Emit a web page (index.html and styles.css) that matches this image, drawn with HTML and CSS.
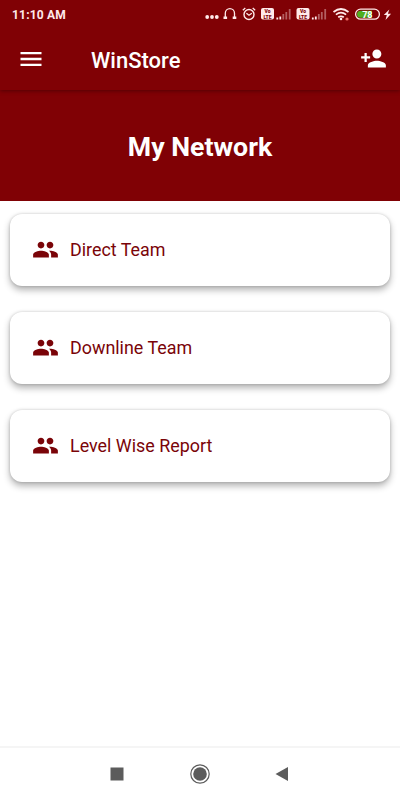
FILE: index.html
```html
<!DOCTYPE html>
<html lang="en">
<head>
  <meta charset="utf-8">
  <meta name="viewport" content="width=device-width, initial-scale=1">
  <title>WinStore</title>
  <link rel="stylesheet" href="styles.css">
</head>
<body>
  <header class="top">
    <div class="status-bar">
      <span class="time">11:10 AM</span>
      <svg class="status-icons" viewBox="0 0 188 18" fill="none" stroke="currentColor">
        <g fill="currentColor" stroke="none">
          <circle cx="2.200" cy="12" r="1.900"/>
          <circle cx="7" cy="12" r="1.900"/>
          <circle cx="11.800" cy="12" r="1.900"/>
        </g>
        <!-- headset -->
        <path d="M20.300 13.500V8.200a4.600 4.600 0 0 1 9.200 0v5.300" stroke-width="1.300"/>
        <path d="M18.500 12.800h3.600M27.700 12.800h3.600" stroke-width="2.400"/>
        <!-- alarm -->
        <circle cx="44" cy="9.500" r="5" stroke-width="1.400"/>
        <path d="M41.400 8.300l2.600 2 2.800-2M37.800 5.300l2.500-2.200M50.200 5.300l-2.500-2.200" stroke-width="1.300"/>
        <!-- sim 1 -->
        <rect x="56" y="3" width="13" height="11.600" rx="2" fill="currentColor" stroke="none"/>
        <text class="volte" x="62.500" y="8.200">Vo</text>
        <text class="volte" x="62.500" y="13.500">LTE</text>
        <g stroke-width="1.800">
          <path d="M72.300 14.500v-2M75.300 14.500v-3"/>
          <path class="dim" d="M78.300 14.500V9M81.300 14.500V7M84.700 14.500V4"/>
        </g>
        <!-- sim 2 -->
        <rect x="91.500" y="3" width="13" height="11.600" rx="2" fill="currentColor" stroke="none"/>
        <text class="volte" x="98" y="8.200">Vo</text>
        <text class="volte" x="98" y="13.500">LTE</text>
        <g stroke-width="1.800">
          <path d="M107.800 14.500v-2M110.800 14.500v-3"/>
          <path class="dim" d="M113.800 14.500V9M116.800 14.500V7M120.200 14.500V4"/>
        </g>
        <!-- wifi -->
        <path d="M128.500 7q7.500-6 15 0M130.900 9.700q5.100-4 10.200 0M133.200 12.300q2.800-2 5.600 0" stroke-width="1.700"/>
        <circle cx="136" cy="14" r="1.300" fill="currentColor" stroke="none"/>
        <circle class="alert" cx="142" cy="14" r="1.600"/>
        <!-- battery -->
        <rect x="150.600" y="4.200" width="23.800" height="10" rx="5" stroke-width="1.300"/>
        <path class="charge" d="M155.500 5.700h11.500v7h-11.500a3.500 3.500 0 0 1 0-7z"/>
        <text class="level" x="162.300" y="12.600">78</text>
        <path d="M184.300 4.500l-5.500 5.600h3l-1.300 4.900 5.600-6.300h-3.200z" fill="currentColor" stroke="none"/>
      </svg>
    </div>
    <div class="app-bar">
      <svg class="menu-icon" viewBox="0 0 24 24" fill="currentColor">
        <path d="M3 18h18v-2H3v2zm0-5h18v-2H3v2zm0-7v2h18V6H3z"/>
      </svg>
      <h1 class="app-title">WinStore</h1>
      <svg class="icon" viewBox="0 0 24 24" fill="currentColor">
        <path d="M15 12c2.210 0 4-1.790 4-4s-1.790-4-4-4-4 1.790-4 4 1.790 4 4 4zm-9-2V7H4v3H1v2h3v3h2v-3h3v-2H6zm9 4c-2.670 0-8 1.340-8 4v2h16v-2c0-2.660-5.330-4-8-4z"/>
      </svg>
    </div>
  </header>

  <div class="banner">
    <h2>My Network</h2>
  </div>

  <main class="list">
    <a class="card">
      <svg class="icon" viewBox="0 0 24 24" fill="currentColor">
        <path d="M16 11c1.660 0 2.990-1.340 2.990-3S17.660 5 16 5c-1.660 0-3 1.340-3 3s1.340 3 3 3zm-8 0c1.660 0 2.990-1.340 2.990-3S9.660 5 8 5C6.340 5 5 6.340 5 8s1.340 3 3 3zm0 2c-2.330 0-7 1.170-7 3.500V19h14v-2.500c0-2.330-4.670-3.500-7-3.500zm8 0c-.29 0-.62.020-.97.050 1.160.84 1.970 1.970 1.970 3.450V19h6v-2.500c0-2.330-4.670-3.500-7-3.500z"/>
      </svg>
      <span>Direct Team</span>
    </a>
    <a class="card">
      <svg class="icon" viewBox="0 0 24 24" fill="currentColor">
        <path d="M16 11c1.660 0 2.990-1.340 2.990-3S17.660 5 16 5c-1.660 0-3 1.340-3 3s1.340 3 3 3zm-8 0c1.660 0 2.990-1.340 2.990-3S9.660 5 8 5C6.340 5 5 6.340 5 8s1.340 3 3 3zm0 2c-2.330 0-7 1.170-7 3.500V19h14v-2.500c0-2.330-4.670-3.500-7-3.500zm8 0c-.29 0-.62.020-.97.050 1.160.84 1.970 1.970 1.970 3.450V19h6v-2.500c0-2.330-4.670-3.500-7-3.500z"/>
      </svg>
      <span>Downline Team</span>
    </a>
    <a class="card">
      <svg class="icon" viewBox="0 0 24 24" fill="currentColor">
        <path d="M16 11c1.660 0 2.990-1.340 2.990-3S17.660 5 16 5c-1.660 0-3 1.340-3 3s1.340 3 3 3zm-8 0c1.660 0 2.990-1.340 2.990-3S9.660 5 8 5C6.340 5 5 6.340 5 8s1.340 3 3 3zm0 2c-2.330 0-7 1.170-7 3.500V19h14v-2.500c0-2.330-4.670-3.500-7-3.500zm8 0c-.29 0-.62.020-.97.050 1.160.84 1.970 1.970 1.970 3.450V19h6v-2.500c0-2.330-4.670-3.500-7-3.500z"/>
      </svg>
      <span>Level Wise Report</span>
    </a>
  </main>

  <nav class="nav-bar">
    <svg viewBox="0 0 20 20" fill="currentColor">
      <rect x="3.500" y="3.500" width="13" height="13"/>
    </svg>
    <svg viewBox="0 0 20 20" fill="currentColor">
      <circle cx="10" cy="10" r="9.200" fill="none" stroke="currentColor" stroke-width="1.200"/>
      <circle cx="10" cy="10" r="6.800"/>
    </svg>
    <svg viewBox="0 0 20 20" fill="currentColor">
      <path d="M3.500 10L16 3v14z"/>
    </svg>
  </nav>
</body>
</html>
```
FILE: styles.css
```css
* {
  box-sizing: border-box;
}
body {
  margin: 0;
  height: 800px;
  display: flex;
  flex-direction: column;
  font-family: Roboto, sans-serif;
  background: #fff;
  overflow: hidden;
}
h1,
h2 {
  margin: 0;
}
.top {
  height: 90px;
  color: #ffeaea;
  background: #800105;
  box-shadow: 0 1px 4px rgba(0, 0, 0, 0.35);
  z-index: 1;
}
.status-bar {
  height: 28px;
  padding: 0 7px 0 12px;
  display: flex;
  align-items: center;
  justify-content: space-between;
}
.time {
  padding-top: 1px;
  font-size: 12px;
  font-weight: 700;
  letter-spacing: 0.2px;
  line-height: 28px;
}
.status-icons {
  width: 188px;
  height: 18px;
}
.dim {
  opacity: 0.4;
}
.volte {
  font-size: 5px;
  font-weight: 900;
  text-anchor: middle;
  fill: #800105;
  stroke: none;
}
.alert {
  fill: #f07068;
  stroke: none;
}
.charge {
  fill: #4fae1f;
  stroke: none;
}
.level {
  font-size: 9px;
  font-weight: 700;
  text-anchor: middle;
  fill: #fff;
  stroke: none;
}
.app-bar {
  height: 61px;
  padding: 0 13px 0 17px;
  display: flex;
  align-items: center;
  color: #fff;
}
.menu-icon {
  width: 28px;
  height: 28px;
}
.app-title {
  flex: 1;
  margin-left: 46px;
  padding-top: 3px;
  font-size: 22px;
  font-weight: 500;
}
.icon {
  width: 27px;
  height: 27px;
}
.banner {
  height: 111px;
  padding-top: 3px;
  display: flex;
  align-items: center;
  justify-content: center;
  color: #fff;
  background: #800105;
}
.banner h2 {
  font-size: 26.7px;
  font-weight: 700;
}
.list {
  flex: 1;
  padding: 13px 10px;
  display: flex;
  flex-direction: column;
  gap: 26px;
}
.card {
  height: 72px;
  padding: 0 22px 1px;
  display: flex;
  align-items: center;
  gap: 11px;
  font-size: 17.9px;
  color: #7a0408;
  background: #fff;
  border-radius: 12px;
  box-shadow: 0 4px 7px rgba(0, 0, 0, 0.3), 0 0 3px rgba(0, 0, 0, 0.18);
}
.card span {
  margin-top: -1px;
}
.nav-bar {
  height: 54px;
  padding: 0 108px 0 107px;
  display: flex;
  align-items: center;
  justify-content: space-between;
  color: #5c5c5c;
  border-top: 2px solid #f5f5f5;
}
.nav-bar svg {
  width: 20px;
  height: 20px;
}
```
